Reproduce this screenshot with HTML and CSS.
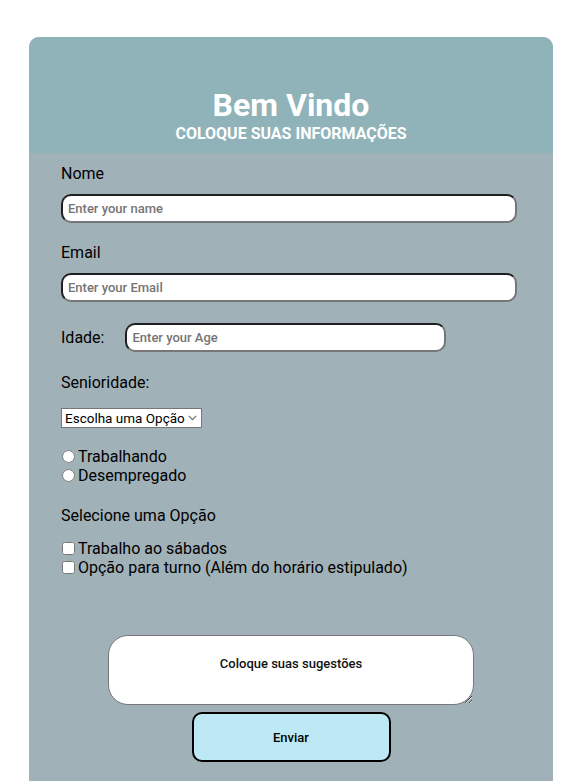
FILE: index.html
```html
<!DOCTYPE html>
<html lang="pt">
<head>
<meta charset="utf-8">
<title>Bem Vindo</title>
<link rel="stylesheet" href="styles.css">
</head>
<body>
<div class="card">
  <header class="head">
    <h1 class="title">Bem Vindo</h1>
    <p class="subtitle">COLOQUE SUAS INFORMAÇÕES</p>
  </header>
  <form class="form">
    <label class="label" for="nome">Nome</label>
    <input class="field" id="nome" type="text" placeholder="Enter your name">
    <label class="label label-gap" for="email">Email</label>
    <input class="field" id="email" type="email" placeholder="Enter your Email">
    <div class="row-age">
      <label class="label" for="idade">Idade:</label>
      <input class="field field-age" id="idade" type="number" placeholder="Enter your Age">
    </div>
    <label class="label label-sen" for="sen">Senioridade:</label>
    <select class="select" id="sen">
      <option>Escolha uma Opção</option>
    </select>
    <div class="choices radios">
      <label class="choice"><input type="radio" name="st" class="radio">Trabalhando</label>
      <label class="choice"><input type="radio" name="st" class="radio">Desempregado</label>
    </div>
    <p class="label label-sel">Selecione uma Opção</p>
    <div class="choices checks">
      <label class="choice"><input type="checkbox" class="check">Trabalho ao sábados</label>
      <label class="choice"><input type="checkbox" class="check">Opção para turno (Além do horário estipulado)</label>
    </div>
    <textarea class="area" placeholder="Coloque suas sugestões"></textarea>
    <button class="send" type="button">Enviar</button>
  </form>
</div>
</body>
</html>
```
FILE: styles.css
```css
html, body {
  margin: 0;
  padding: 0;
  background: #ffffff;
}
body {
  font-family: Roboto, "Liberation Sans", sans-serif;
}
.card {
  width: 524px;
  margin: 37px 0 0 29px;
  border-radius: 10px 10px 0 0;
  overflow: hidden;
  background: #a1b1b8;
}
.head {
  background: #8fb3b8;
  height: 116px;
  box-sizing: border-box;
  padding-top: 49px;
  text-align: center;
  color: #ffffff;
}
.title {
  margin: 0;
  font-size: 32px;
  line-height: 38px;
  font-weight: 700;
}
.subtitle {
  margin: 0;
  font-size: 16px;
  line-height: 20px;
  font-weight: 700;
}
.form {
  display: flex;
  flex-direction: column;
  align-items: flex-start;
  padding: 11px 0 20px 32px;
}
.label {
  font-size: 16px;
  line-height: 19px;
  color: #000;
  margin: 0;
}
.field {
  box-sizing: border-box;
  width: 456px;
  height: 29px;
  margin-top: 11px;
  border: 2px solid;
  border-color: #1f1f1f #767676 #767676 #1f1f1f;
  border-radius: 10px;
  background: #fff;
  padding: 0 5px;
  font-family: Roboto, "Liberation Sans", sans-serif;
  font-size: 13px;
  font-weight: 500;
  outline: none;
}
.field::placeholder {
  color: #757575;
}
.label-gap {
  margin-top: 20px;
}
.row-age {
  display: flex;
  align-items: center;
  gap: 21px;
  margin-top: 21px;
}
.field-age {
  width: 321px;
  margin-top: 0;
  -moz-appearance: textfield;
}
.field-age::-webkit-inner-spin-button,
.field-age::-webkit-outer-spin-button {
  -webkit-appearance: none;
  margin: 0;
}
.label-sen {
  margin-top: 21px;
}
.select {
  -webkit-appearance: none;
  appearance: none;
  margin-top: 16px;
  height: 20px;
  width: 141px;
  padding: 0 0 0 3px;
  font-family: Roboto, "Liberation Sans", sans-serif;
  font-size: 13.5px;
  color: #000;
  background: #fff url("data:image/svg+xml,%3Csvg xmlns='http://www.w3.org/2000/svg' width='9' height='6' viewBox='0 0 9 6'%3E%3Cpath d='M0.7 0.8 L4.5 4.6 L8.3 0.8' fill='none' stroke='%23707070' stroke-width='1.2'/%3E%3C/svg%3E") no-repeat right 4px center;
  border: 1px solid #767676;
  border-radius: 0;
}
.choices {
  display: flex;
  flex-direction: column;
}
.radios {
  margin-top: 19px;
}
.checks {
  margin-top: 14px;
}
.choice {
  display: flex;
  align-items: center;
  font-size: 16px;
  line-height: 19px;
  color: #000;
}
.radio, .check {
  margin: 0 3px 0 1px;
  width: 13px;
  height: 13px;
}
.label-sel {
  margin-top: 21px;
}
.area {
  box-sizing: border-box;
  align-self: center;
  margin: 58px 32px 0 0;
  width: 366px;
  height: 70px;
  border: 1px solid #767676;
  border-radius: 20px;
  background: #fff;
  padding: 20px 10px;
  text-align: center;
  font-family: Roboto, "Liberation Sans", sans-serif;
  font-size: 13px;
  font-weight: 500;
  outline: none;
}
.area::placeholder {
  color: #111;
}
.send {
  align-self: center;
  margin: 7px 32px 0 0;
  width: 199px;
  height: 50px;
  background: #bde9f5;
  border: 2px solid #000;
  border-radius: 10px;
  font-family: Roboto, "Liberation Sans", sans-serif;
  font-size: 13px;
  font-weight: 500;
  color: #000;
}
```
